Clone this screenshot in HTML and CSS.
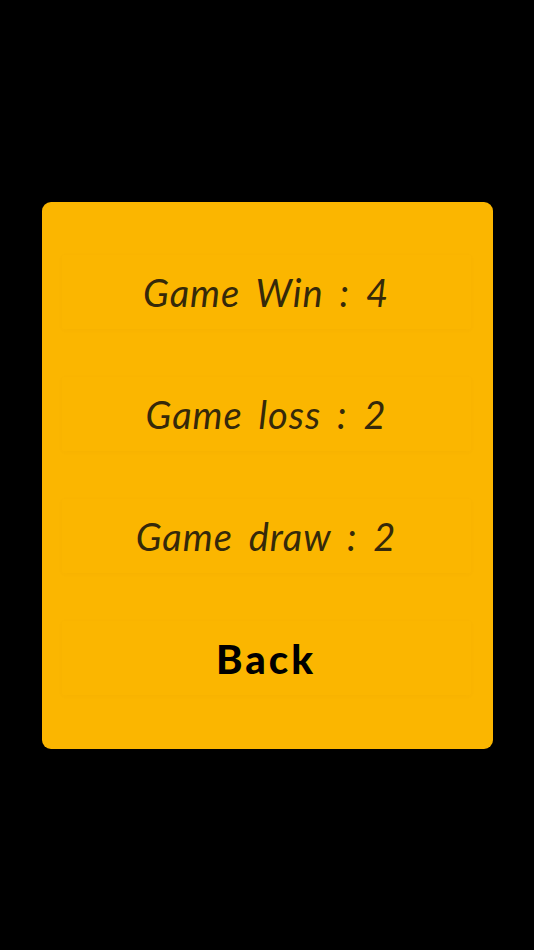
FILE: index.html
```html
<!DOCTYPE html>
<html>
<head>
<meta charset="utf-8">
<link rel="stylesheet" href="styles.css">
</head>
<body>
  <div class="card">
    <div class="row"><span class="stat">Game Win : 4</span></div>
    <div class="row"><span class="stat">Game loss : 2</span></div>
    <div class="row"><span class="stat">Game draw : 2</span></div>
    <div class="row"><span class="back">Back</span></div>
  </div>
</body>
</html>
```
FILE: styles.css
```css
html, body {
  margin: 0;
  padding: 0;
  background: #000;
}
body {
  width: 534px;
  height: 950px;
  display: flex;
  align-items: center;
  justify-content: center;
  font-family: Lato, "Noto Sans", sans-serif;
}
.card {
  width: 451px;
  height: 547px;
  box-sizing: border-box;
  background: #fbb600;
  border-radius: 9px;
  padding: 29px 22px 29px 20px;
  display: flex;
  flex-direction: column;
}
.row {
  height: 74px;
  margin: 24px 0;
  flex: none;
  display: flex;
  align-items: center;
  justify-content: center;
  border-radius: 2px;
  box-shadow: 0 1px 5px rgba(120, 80, 0, 0.035);
}
.stat {
  font-style: italic;
  font-size: 38px;
  color: #35290a;
  letter-spacing: 1px;
  word-spacing: 6px;
}
.back {
  font-weight: 900;
  font-size: 40px;
  color: #000;
  letter-spacing: 3px;
  margin-top: 3px;
}
```
